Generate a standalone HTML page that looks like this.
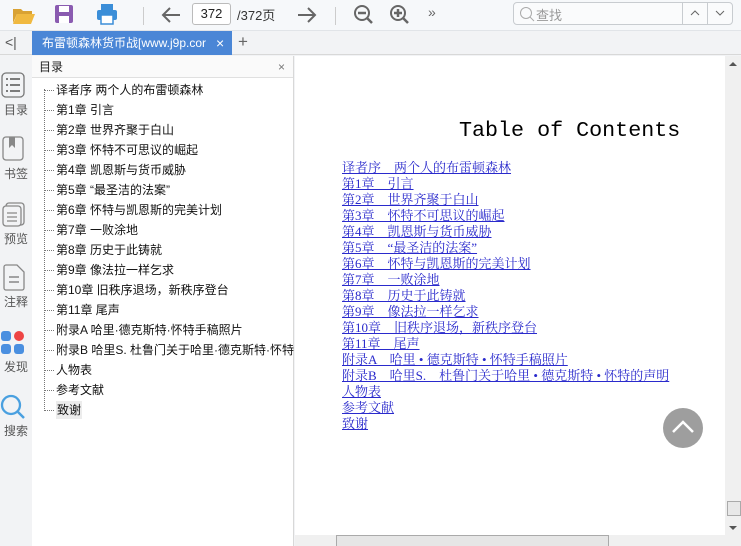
<!DOCTYPE html>
<html><head><meta charset="utf-8"><style>
*{margin:0;padding:0;box-sizing:border-box}
body{width:741px;height:546px;overflow:hidden;background:#f2f3f5;font-family:"Liberation Sans","Noto Sans CJK SC",sans-serif;position:relative}
.abs{position:absolute}
#tb{left:0;top:0;width:741px;height:31px;background:#f6f8fa;border-bottom:1px solid #e1e4e8}
#tabs{left:0;top:31px;width:741px;height:24px;background:#f2f3f5;border-bottom:1px solid #d8d8d8}
#tab{left:32px;top:31px;width:200px;height:24px;background:#4a86d6;color:#fff;font-size:12px;line-height:24px;padding-left:10px;white-space:nowrap;overflow:hidden}
#rail{left:0;top:56px;width:32px;height:490px;background:#f2f3f5}
.ri{position:absolute;left:0;width:32px;text-align:center;font-size:12px;color:#555}
#toc{left:32px;top:56px;width:262px;height:490px;background:#fff;border-right:1px solid #d8d8d8}
#toch{height:22px;border-bottom:1px solid #e0e0e0;font-size:12px;line-height:22px;padding-left:7px;color:#222;background:#fafafa}
.ti{position:absolute;left:24px;font-size:12px;color:#111;white-space:nowrap;line-height:16px}
.dot{position:absolute;left:12px;width:10px;border-top:1px dotted #777}
#page{left:295px;top:56px;width:430px;height:479px;background:#fff}
#title{left:459px;top:118px;font-family:"Liberation Mono",monospace;font-size:21.7px;color:#000}
.ln{position:absolute;left:342px;font-family:"Liberation Serif","Noto Serif CJK SC",serif;font-size:13px;line-height:16px;color:#2a2acc;text-decoration:underline;white-space:pre}
</style></head><body>
<div id="tb" class="abs"></div>
<svg class="abs" style="left:12px;top:4px" width="24" height="22"><path d="M1 5h8l2 2h9v3H5L1 19z" fill="#d9a233"/><path d="M5 10h18l-4 10H1z" fill="#f0b940"/></svg>
<svg class="abs" style="left:54px;top:4px" width="20" height="20"><rect x="1" y="1" width="18" height="18" rx="2" fill="#8a5bb0"/><rect x="5" y="2" width="10" height="6" fill="#fff"/><rect x="5" y="12" width="10" height="7" fill="#fff"/></svg>
<svg class="abs" style="left:96px;top:3px" width="22" height="22"><rect x="5" y="1" width="12" height="6" fill="#3b8ed8"/><rect x="1" y="7" width="20" height="10" rx="2" fill="#3b8ed8"/><rect x="5" y="12" width="12" height="9" fill="#fff" stroke="#3b8ed8" stroke-width="1.5"/></svg>
<div class="abs" style="left:143px;top:7px;width:1px;height:18px;background:#ccc"></div>
<svg class="abs" style="left:160px;top:5px" width="22" height="20"><path d="M20 10H3M10 3l-7 7 7 7" stroke="#666" stroke-width="2" fill="none"/></svg>
<div class="abs" style="left:192px;top:3px;width:39px;height:22px;border:1px solid #bbb;border-radius:3px;background:#fff;font-size:13px;line-height:20px;text-align:center;color:#222">372</div>
<div class="abs" style="left:237px;top:5px;font-size:13px;color:#333">/372页</div>
<svg class="abs" style="left:296px;top:5px" width="22" height="20"><path d="M2 10h17M12 3l7 7-7 7" stroke="#666" stroke-width="2" fill="none"/></svg>
<div class="abs" style="left:335px;top:7px;width:1px;height:18px;background:#ccc"></div>
<svg class="abs" style="left:353px;top:4px" width="22" height="22"><circle cx="9" cy="9" r="7" stroke="#666" stroke-width="2" fill="none"/><path d="M5 9h8M14 14l5 5" stroke="#666" stroke-width="2.5"/></svg>
<svg class="abs" style="left:389px;top:4px" width="22" height="22"><circle cx="9" cy="9" r="7" stroke="#666" stroke-width="2" fill="none"/><path d="M5 9h8M9 5v8M14 14l5 5" stroke="#666" stroke-width="2.5"/></svg>
<div class="abs" style="left:428px;top:4px;font-size:14px;color:#666">»</div>
<div class="abs" style="left:513px;top:2px;width:220px;height:23px;border:1px solid #c8ccd0;border-radius:4px;background:#fafbfc"></div>
<svg class="abs" style="left:519px;top:6px" width="16" height="16"><circle cx="7" cy="7" r="5.5" stroke="#aaa" fill="none"/><path d="M11 11l4 4" stroke="#aaa"/></svg>
<div class="abs" style="left:536px;top:5px;font-size:13px;color:#999">查找</div>
<div class="abs" style="left:682px;top:2px;width:1px;height:23px;background:#c8ccd0"></div>
<div class="abs" style="left:707px;top:2px;width:1px;height:23px;background:#c8ccd0"></div>
<svg class="abs" style="left:689px;top:9px" width="12" height="8"><path d="M2 6l4-4 4 4" stroke="#666" fill="none"/></svg>
<svg class="abs" style="left:714px;top:9px" width="12" height="8"><path d="M2 2l4 4 4-4" stroke="#666" fill="none"/></svg>

<div id="tabs" class="abs"></div>
<div class="abs" style="left:5px;top:34px;font-size:14px;color:#555">&lt;|</div>
<div id="tab" class="abs">布雷顿森林货币战[www.j9p.cor<span style="position:absolute;left:184px;font-size:14px">×</span></div>
<div class="abs" style="left:238px;top:32px;font-size:17px;color:#666">+</div>

<div id="rail" class="abs">
 <svg class="ri" style="top:16px;left:1px" width="24" height="26"><rect x="1" y="1" width="22" height="24" rx="4" fill="none" stroke="#777" stroke-width="1.3"/><path d="M5 7h2M9 7h10M5 13h2M9 13h10M5 19h2M9 19h10" stroke="#555" stroke-width="1.5"/></svg>
 <div class="ri" style="top:45px">目录</div>
 <svg class="ri" style="top:80px;left:2px" width="24" height="26"><rect x="1" y="1" width="20" height="23" rx="3" fill="none" stroke="#888" stroke-width="1.3"/><path d="M7 1v11l3-3 3 3V1" fill="#888"/></svg>
 <div class="ri" style="top:109px">书签</div>
 <svg class="ri" style="top:146px;left:2px" width="24" height="26"><rect x="4" y="1" width="18" height="22" rx="3" fill="none" stroke="#888" stroke-width="1.3"/><rect x="1" y="4" width="18" height="20" rx="3" fill="#f2f3f5" stroke="#888" stroke-width="1.3"/><path d="M5 11h10M5 15h10M5 19h10" stroke="#888" stroke-width="1.3"/></svg>
 <div class="ri" style="top:174px">预览</div>
 <svg class="ri" style="top:208px;left:2px" width="24" height="28"><path d="M2 3a2 2 0 012-2h11l7 7v16a2 2 0 01-2 2H4a2 2 0 01-2-2z" fill="none" stroke="#888" stroke-width="1.3"/><path d="M7 13h10M7 18h10" stroke="#888" stroke-width="1.5"/></svg>
 <div class="ri" style="top:237px">注释</div>
 <svg class="ri" style="top:274px;left:0" width="26" height="26"><rect x="1" y="1" width="10" height="10" rx="3" fill="#4a8fe0"/><circle cx="19" cy="6" r="5" fill="#ee4444"/><rect x="1" y="14" width="10" height="10" rx="3" fill="#4a8fe0"/><rect x="14" y="14" width="10" height="10" rx="3" fill="#4a8fe0"/></svg>
 <div class="ri" style="top:302px">发现</div>
 <svg class="ri" style="top:338px;left:0" width="26" height="26"><circle cx="11" cy="11" r="9" fill="none" stroke="#4aa0e0" stroke-width="2.3"/><path d="M18 18l6 6" stroke="#4aa0e0" stroke-width="2.5"/></svg>
 <div class="ri" style="top:366px">搜索</div>
</div>

<div id="toc" class="abs"><div id="toch">目录<span style="position:absolute;right:8px;color:#777">×</span></div>
<div class="abs" style="left:12px;top:33px;height:320px;border-left:1px dotted #777"></div>
</div>
<div class="abs" style="left:32px;top:56px;width:262px;height:490px;overflow:hidden">
<div class="dot" style="top:34px"></div><div class="ti" style="top:26px">译者序 两个人的布雷顿森林</div>
<div class="dot" style="top:54px"></div><div class="ti" style="top:46px">第1章 引言</div>
<div class="dot" style="top:74px"></div><div class="ti" style="top:66px">第2章 世界齐聚于白山</div>
<div class="dot" style="top:94px"></div><div class="ti" style="top:86px">第3章 怀特不可思议的崛起</div>
<div class="dot" style="top:114px"></div><div class="ti" style="top:106px">第4章 凯恩斯与货币威胁</div>
<div class="dot" style="top:134px"></div><div class="ti" style="top:126px">第5章 “最圣洁的法案”</div>
<div class="dot" style="top:154px"></div><div class="ti" style="top:146px">第6章 怀特与凯恩斯的完美计划</div>
<div class="dot" style="top:174px"></div><div class="ti" style="top:166px">第7章 一败涂地</div>
<div class="dot" style="top:194px"></div><div class="ti" style="top:186px">第8章 历史于此铸就</div>
<div class="dot" style="top:214px"></div><div class="ti" style="top:206px">第9章 像法拉一样乞求</div>
<div class="dot" style="top:234px"></div><div class="ti" style="top:226px">第10章 旧秩序退场，新秩序登台</div>
<div class="dot" style="top:254px"></div><div class="ti" style="top:246px">第11章 尾声</div>
<div class="dot" style="top:274px"></div><div class="ti" style="top:266px">附录A 哈里·德克斯特·怀特手稿照片</div>
<div class="dot" style="top:294px"></div><div class="ti" style="top:286px">附录B 哈里S. 杜鲁门关于哈里·德克斯特·怀特</div>
<div class="dot" style="top:314px"></div><div class="ti" style="top:306px">人物表</div>
<div class="dot" style="top:334px"></div><div class="ti" style="top:326px">参考文献</div>
<div class="dot" style="top:354px"></div><div class="ti" style="top:345px;background:#ececec;padding:1px 1px">致谢</div>
</div>

<div id="page" class="abs"></div>
<div id="title" class="abs">Table of Contents</div>
<div class="ln" style="top:160px">译者序　两个人的布雷顿森林</div>
<div class="ln" style="top:176px">第1章　引言</div>
<div class="ln" style="top:192px">第2章　世界齐聚于白山</div>
<div class="ln" style="top:208px">第3章　怀特不可思议的崛起</div>
<div class="ln" style="top:224px">第4章　凯恩斯与货币威胁</div>
<div class="ln" style="top:240px">第5章　“最圣洁的法案”</div>
<div class="ln" style="top:256px">第6章　怀特与凯恩斯的完美计划</div>
<div class="ln" style="top:272px">第7章　一败涂地</div>
<div class="ln" style="top:288px">第8章　历史于此铸就</div>
<div class="ln" style="top:304px">第9章　像法拉一样乞求</div>
<div class="ln" style="top:320px">第10章　旧秩序退场，新秩序登台</div>
<div class="ln" style="top:336px">第11章　尾声</div>
<div class="ln" style="top:352px">附录A　哈里 • 德克斯特 • 怀特手稿照片</div>
<div class="ln" style="top:368px">附录B　哈里S.　杜鲁门关于哈里 • 德克斯特 • 怀特的声明</div>
<div class="ln" style="top:384px">人物表</div>
<div class="ln" style="top:400px">参考文献</div>
<div class="ln" style="top:416px">致谢</div>
<svg class="abs" style="left:663px;top:408px" width="40" height="40"><circle cx="20" cy="20" r="20" fill="#9e9e9e"/><path d="M10 24l10-10 10 10" stroke="#fff" stroke-width="2.5" fill="none"/></svg>
<div class="abs" style="left:725px;top:56px;width:16px;height:479px;background:#f0f0f0"></div>
<div class="abs" style="left:729px;top:62px;border:4px solid transparent;border-bottom-color:#555;border-top:0"></div>
<div class="abs" style="left:727px;top:501px;width:14px;height:15px;background:#e8e8e8;border:1px solid #aaa"></div>
<div class="abs" style="left:729px;top:526px;border:4px solid transparent;border-top-color:#555;border-bottom:0"></div>
<div class="abs" style="left:295px;top:535px;width:446px;height:11px;background:#f0f0f0"></div>
<div class="abs" style="left:336px;top:535px;width:273px;height:11px;background:#e6e6e6;border:1px solid #aaa;border-bottom:0"></div>
</body></html>
